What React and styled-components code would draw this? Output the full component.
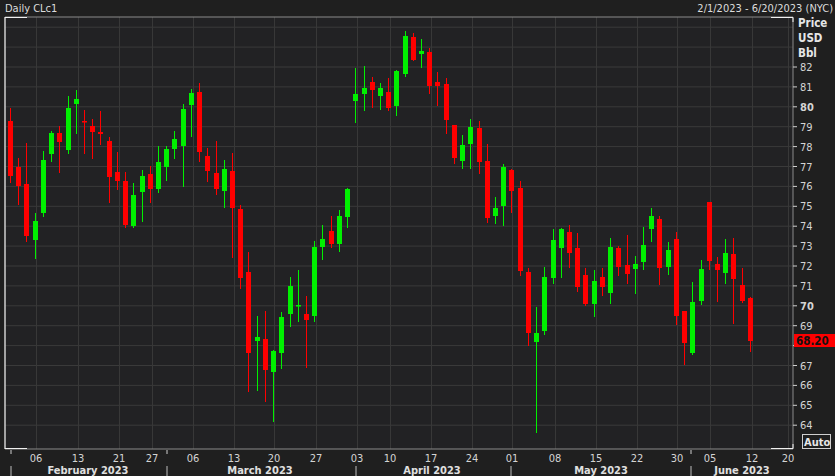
import React from "react";
import styled, { createGlobalStyle } from "styled-components";

const Global = createGlobalStyle`
  html, body { margin: 0; padding: 0; background: #1f1f1f; }
  body { width: 835px; height: 476px; overflow: hidden; }
`;

const Page = styled.div`
  width: 835px; height: 476px; display: flex; flex-direction: column;
  background: #1f1f1f;
  font-family: "DejaVu Sans Condensed", "DejaVu Sans", sans-serif;
  color: #d8d8d8;
`;
const TitleBar = styled.div`
  height: 16px; display: flex; justify-content: space-between; align-items: center;
  padding: 0 2px 0 5px; font-size: 11px; color: #dcdcdc;
`;
const ChartSvg = styled.svg`
  display: block; flex: 1;
`;

// [x, wickTop, bodyTop, bodyBottom, wickBottom, up]
const C = [
[10,108,121,176,183,0],[18,158,167,186,205,0],[26,143,184,236,242,0],[35,213,221,240,259,1],[43,151,160,213,217,1],
[51,131,133,154,162,1],[59,126,133,142,173,0],[68,96,108,150,154,1],[76,90,99,104,134,1],[84,110,121,122,154,0],
[92,119,126,132,159,0],[100,111,132,134,145,0],[109,137,141,177,203,0],[117,152,172,181,190,0],[125,172,181,225,228,0],
[133,183,195,226,228,1],[142,170,176,192,222,1],[150,166,174,189,203,0],[158,146,162,189,193,1],[166,146,149,167,181,1],
[174,131,139,149,159,1],[183,104,109,146,187,1],[191,89,93,105,137,1],[199,83,92,152,162,0],[207,148,156,171,182,0],
[216,141,173,189,195,0],[224,160,169,191,208,1],[232,153,171,208,258,0],[240,205,209,278,289,0],[248,252,272,353,392,0],
[257,316,337,341,391,1],[265,311,339,370,402,0],[273,350,351,372,422,1],[281,312,317,353,369,1],[290,277,286,314,327,1],
[298,270,305,306,322,1],[306,296,314,320,368,0],[314,241,247,316,322,1],[322,225,239,247,260,1],[331,216,231,244,248,0],
[339,210,216,244,252,1],[347,188,189,217,228,1],[355,68,94,101,123,1],[364,66,88,94,111,1],[372,77,82,90,108,0],
[380,83,88,96,110,1],[388,78,92,108,111,0],[396,70,71,106,116,1],[405,31,36,74,77,1],[413,33,37,60,61,0],
[421,39,51,54,68,1],[429,48,52,86,94,0],[437,72,82,86,106,0],[446,78,84,120,134,0],[454,125,125,158,164,0],
[462,135,145,161,169,1],[470,119,127,144,169,1],[479,121,128,162,174,0],[487,144,161,218,223,0],[495,197,208,216,224,1],
[503,164,167,206,226,1],[511,169,170,191,213,0],[520,181,188,271,276,0],[528,268,272,333,346,0],[536,307,333,342,433,1],
[544,267,277,331,335,1],[553,229,240,278,284,1],[561,228,229,248,278,1],[569,225,232,253,268,0],[577,233,248,287,292,0],
[585,268,275,304,306,0],[594,270,281,304,317,1],[602,268,277,287,296,0],[610,238,247,293,304,1],[618,246,248,267,276,0],
[627,235,265,274,284,0],[635,256,264,269,294,1],[643,227,245,262,270,1],[651,208,216,229,242,1],[659,216,219,268,285,0],
[668,242,250,267,275,1],[676,232,239,316,325,0],[684,311,311,343,365,0],[692,282,302,353,355,1],[701,260,269,301,305,1],
[709,202,202,261,270,0],[717,257,264,270,302,0],[725,239,253,273,284,1],[733,238,254,279,324,0],[742,268,285,301,303,0],
[750,297,298,341,352,0],
];

const py = (p) => 67 + (82 - p) * 19.9;
const prices = Array.from({ length: 22 }, (_, i) => 64 + i);
const vgrid = [36, 78, 119, 152, 193, 234, 274, 316, 357, 390, 431, 472, 512, 555, 596, 637, 677, 710, 752, 788];
const dateLbl = ["06","13","21","27","06","13","20","27","03","10","17","24","01","08","15","22","30","05","12","20"];
const months = [[88,"February 2023"],[260,"March 2023"],[432,"April 2023"],[601,"May 2023"],[742,"June 2023"]];

const PL = 5, PT = 17, PR = 793, PB = 449;

export default function App() {
  return (
    <Page>
      <Global />
      <TitleBar>
        <span>Daily CLc1</span>
        <span>2/1/2023 - 6/20/2023 (NYC)</span>
      </TitleBar>
      <ChartSvg width="835" height="460" viewBox="0 16 835 460" fontFamily='"DejaVu Sans Condensed","DejaVu Sans",sans-serif'>
        <rect x={PL} y={PT} width={PR - PL} height={PB - PT} fill="#222224" />
        {prices.map((p) => py(p) > PT && py(p) < PB && (
          <line key={p} x1={PL} x2={PR} y1={py(p)} y2={py(p)} stroke="#3a3a3a" strokeWidth="1" />
        ))}
        {vgrid.map((x) => <line key={x} x1={x + 0.5} x2={x + 0.5} y1={PT} y2={PB} stroke="#383838" />)}
        {C.map(([x, wt, bt, bb, wb, up], i) => {
          const col = up ? "#00f000" : "#ff0000";
          return (
            <g key={i}>
              <line x1={x + 0.5} x2={x + 0.5} y1={wt} y2={wb} stroke={col} />
              <rect x={x - 2} y={bt} width="5" height={Math.max(1.5, bb - bt)} fill={col} />
            </g>
          );
        })}
        <path d={`M${PL} ${PT}H${PR}V${PB}H${PL}Z`} fill="none" stroke="#8a8a8a" />
        <line x1={PL} x2={PL} y1={PT} y2={PB} stroke="#f0f0f0" />
        <path d={`M${PL} ${PT + 0.5}H${PL + 22}M${PR - 22} ${PT + 0.5}H${PR}V${PT + 5}M${PL} ${PB - 0.5}H${PL + 22}M${PR - 22} ${PB - 0.5}H${PR}V${PB - 5}`} stroke="#f0f0f0" fill="none" />
        <g fill="#e6e6e6" fontSize="11.5" fontWeight="bold">
          <text x="798" y="27">Price</text>
          <text x="798" y="42">USD</text>
          <text x="798" y="57">Bbl</text>
        </g>
        {prices.filter((p) => p <= 82).map((p) => (
          <g key={p}>
            <line x1={PR} x2={PR + 4} y1={py(p)} y2={py(p)} stroke="#cfcfcf" />
            {p !== 68 && (
              <text x="800" y={py(p) + 4} fontSize="11" fill="#d4d4d4" fontWeight={p % 10 === 0 ? "bold" : "normal"}>{p}</text>
            )}
          </g>
        ))}
        <rect x="794" y="334" width="41" height="13" fill="#ff0000" />
        <text x="796" y="345" fontSize="11.5" fontWeight="bold" fill="#111">68.20</text>
        <rect x="802.5" y="434.5" width="28" height="14" fill="#1f1f1f" stroke="#cfcfcf" />
        <text x="804" y="446" fontSize="11" fontWeight="bold" fill="#e6e6e6">Auto</text>
        {vgrid.map((x, i) => (
          <text key={i} x={x} y="462" fontSize="11" fill="#d4d4d4" textAnchor="middle">{dateLbl[i]}</text>
        ))}
        {[11, 167, 691].map((x) => <line key={x} x1={x} x2={x} y1={PB + 1} y2={PB + 5} stroke="#cfcfcf" />)}
        {[11, 167, 356, 511, 691].map((x) => <line key={x} x1={x} x2={x} y1="466" y2="476" stroke="#bdbdbd" />)}
        {months.map(([cx, t]) => (
          <text key={t} x={cx} y="474" fontSize="11" fontWeight="bold" fill="#e0e0e0" textAnchor="middle">{t}</text>
        ))}
      </ChartSvg>
    </Page>
  );
}
